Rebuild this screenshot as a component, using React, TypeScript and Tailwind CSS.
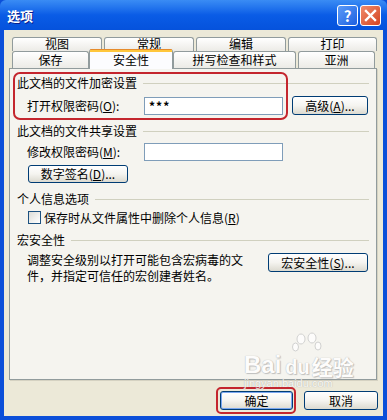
import React from "react";

const font = "font-['Noto_Sans_CJK_SC','Noto_Sans',sans-serif]";

const Tab = ({ label, w, selected = false, h = "h-[17px]" }: { label: string; w: string; selected?: boolean; h?: string }) =>
  selected ? (
    <div
      className={`${w} relative z-10 -mt-[2px] h-[20px] rounded-t-[3px] border-x border-[#919b9c] bg-[#fcfcfe] flex flex-col`}
    >
      <div className="h-[1px] bg-[#e68b2c] rounded-t-[3px]" />
      <div className="h-[2px] bg-[#ffc73c]" />
      <div className="flex-1 flex items-center justify-center text-[12px] leading-none -mt-[2px]">{label}</div>
    </div>
  ) : (
    <div
      className={`${w} ${h} rounded-t-[3px] border-x border-t border-[#919b9c] bg-gradient-to-b from-white to-[#ecebe6] flex items-center justify-center text-[12px] leading-none pb-[1px]`}
    >
      {label}
    </div>
  );

const GroupHeader = ({ label }: { label: string }) => (
  <div className="flex items-center h-[14px] pr-[7px]">
    <span className="text-[12px] leading-none whitespace-nowrap">{label}</span>
    <div className="flex-1 h-px bg-[#d0d0bf] ml-[6px]" />
  </div>
);

const XpButton = ({ children, className = "" }: { children: React.ReactNode; className?: string }) => (
  <div
    className={`rounded-[3px] border border-[#003c74] bg-gradient-to-b from-white via-[#f5f4f0] to-[#dcdad0] flex items-center justify-center text-[12px] leading-none ${className}`}
  >
    {children}
  </div>
);

const Paw = () => (
  <svg width="30" height="28" viewBox="0 0 30 28" className="absolute left-[48px] -top-[22px]">
    <g fill="#ffffff" stroke="#c9c9c9" strokeWidth="1">
      <ellipse cx="9" cy="8" rx="4" ry="5" />
      <ellipse cx="20" cy="7" rx="4" ry="5" />
      <ellipse cx="3.5" cy="16" rx="3" ry="4" />
      <ellipse cx="26" cy="15" rx="3" ry="4" />
    </g>
  </svg>
);

export default function App() {
  return (
    <div className={`w-[387px] h-[420px] flex flex-col bg-[#0b4fd9] text-black ${font} relative overflow-hidden`}>
      {/* title bar */}
      <div className="h-[30px] flex items-center px-[7px] rounded-t-[6px] bg-gradient-to-b from-[#3a8cf4] via-[#0a5ce6] to-[#0552dc]">
        <span className="text-white font-bold text-[13px] leading-none [text-shadow:1px_1px_0_#0a1e8c]">选项</span>
        <div className="ml-auto flex gap-[2px] mr-[-1px]">
          <div className="w-[21px] h-[21px] rounded-[3px] border border-white bg-gradient-to-br from-[#5b9bf8] to-[#1d5fe0] flex items-center justify-center text-white font-bold text-[15px] leading-none">
            ?
          </div>
          <div className="w-[21px] h-[21px] rounded-[3px] border border-white bg-gradient-to-br from-[#f08a6a] to-[#d2421e] flex items-center justify-center">
            <svg width="13" height="13" viewBox="0 0 13 13">
              <path d="M2 2 L11 11 M11 2 L2 11" stroke="white" strokeWidth="2.4" strokeLinecap="square" />
            </svg>
          </div>
        </div>
      </div>

      {/* body */}
      <div className="flex-1 mx-[4px] mb-[4px] bg-[#ece9d8] flex flex-col pl-[5px] pr-[6px] pt-[7px]">
        <div className="ml-[3px] flex gap-[2px] h-[14px]">
          <Tab label="视图" w="w-[90px]" h="h-[14px]" />
          <Tab label="常规" w="w-[90px]" h="h-[14px]" />
          <Tab label="编辑" w="w-[90px]" h="h-[14px]" />
          <Tab label="打印" w="w-[89px]" h="h-[14px]" />
        </div>
        <div className="ml-[3px] flex h-[17px]">
          <Tab label="保存" w="w-[77px]" />
          <Tab label="安全性" w="w-[84px]" selected />
          <Tab label="拼写检查和样式" w="w-[123px]" />
          <div className="w-[2px]" />
          <Tab label="亚洲" w="w-[77px]" />
        </div>

        {/* panel */}
        <div className="w-[368px] h-[312px] border border-[#919b9c] bg-[#f5f4ef] flex flex-col pl-[7px] pt-[7px] shadow-[1px_1px_0_#d5d2c2]">
          <GroupHeader label="此文档的文件加密设置" />
          <div className="mt-[6px] ml-[10px] flex items-center h-[19px]">
            <span className="w-[117px] text-[12px] leading-none">
              打开权限密码(<u>O</u>):
            </span>
            <div className="w-[139px] h-[18px] border border-[#7f9db9] bg-white flex items-center pl-[4px] text-[12px] font-bold tracking-[1px]">
              ***
            </div>
            <XpButton className="ml-[9px] w-[76px] h-[19px]">
              高级(<u>A</u>)...
            </XpButton>
          </div>

          <div className="mt-[9px]">
            <GroupHeader label="此文档的文件共享设置" />
          </div>
          <div className="mt-[5px] ml-[10px] flex items-center h-[18px]">
            <span className="w-[117px] text-[12px] leading-none">
              修改权限密码(<u>M</u>):
            </span>
            <div className="w-[139px] h-[18px] border border-[#7f9db9] bg-white" />
          </div>
          <XpButton className="mt-[4px] ml-[11px] w-[100px] h-[18px]">
            数字签名(<u>D</u>)...
          </XpButton>

          <div className="mt-[9px]">
            <GroupHeader label="个人信息选项" />
          </div>
          <div className="mt-[5px] ml-[11px] flex items-center h-[13px]">
            <div className="w-[13px] h-[13px] border border-[#1c5180] bg-gradient-to-br from-[#dcdcd7] to-white" />
            <span className="ml-[3px] text-[12px] leading-none">
              保存时从文件属性中删除个人信息(<u>R</u>)
            </span>
          </div>

          <div className="mt-[9px]">
            <GroupHeader label="宏安全性" />
          </div>
          <div className="mt-[5px] ml-[10px] flex">
            <p className="w-[232px] text-[12px] leading-[16px]">
              调整安全级别以打开可能包含宏病毒的文件，并指定可信任的宏创建者姓名。
            </p>
            <XpButton className="ml-[9px] mt-[1px] w-[100px] h-[19px]">
              宏安全性(<u>S</u>)...
            </XpButton>
          </div>
        </div>

        {/* bottom buttons */}
        <div className="mt-[11px] flex justify-end gap-[11px] mr-[-1px]">
          <XpButton className="w-[73px] h-[19px] shadow-[inset_0_0_0_1px_#7aa7f0]">确定</XpButton>
          <XpButton className="w-[74px] h-[19px]">取消</XpButton>
        </div>
      </div>

      {/* red annotation marks */}
      <div className="absolute left-[13px] top-[72px] w-[275px] h-[48px] rounded-[7px] border-2 border-[#c4262e]" />
      <div className="absolute left-[216px] top-[387px] w-[80px] h-[27px] rounded-[5px] border-2 border-[#c4262e]" />

      {/* watermark */}
      <div className="absolute left-[244px] top-[353px] pointer-events-none opacity-80">
        <Paw />
        <div className="flex items-end text-white font-['Liberation_Sans',sans-serif] font-bold text-[24px] leading-none [text-shadow:0_0_1px_#9a9a9a,1px_1px_1px_#b5b5b5]">
          <span>Bai</span>
          <span className="ml-[4px] text-[20px]">du</span>
          <span className={`ml-[2px] text-[21px] ${font}`}>经验</span>
        </div>
        <div className="mt-[1px] text-[11px] leading-none text-white font-['Liberation_Sans',sans-serif] [text-shadow:0_0_1px_#8a8a8a]">
          jingyan.baidu.com
        </div>
      </div>
    </div>
  );
}
